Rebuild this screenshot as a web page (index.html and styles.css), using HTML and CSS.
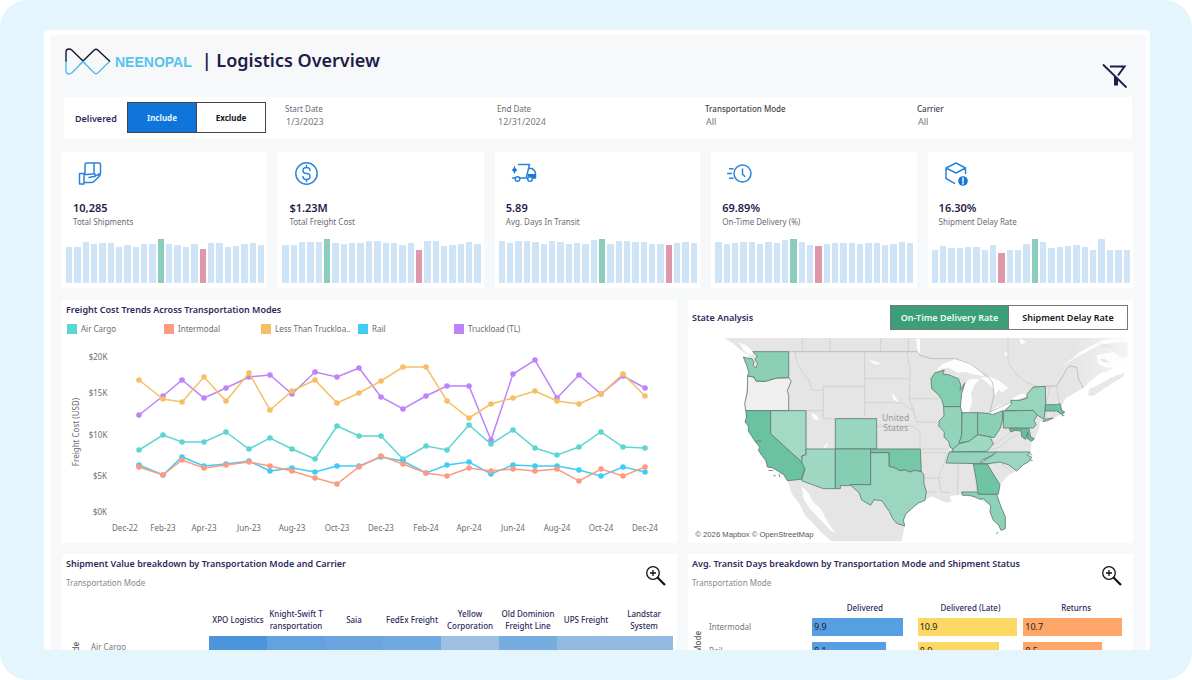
FILE: index.html
```html
<!DOCTYPE html>
<html lang="en">
<head>
<meta charset="utf-8">
<title>Logistics Overview</title>
<link rel="stylesheet" href="styles.css">
</head>
<body>
<div class="stage">
<main class="frame">
<div class="board">
  <header class="head">
    <svg class="logo" viewBox="0 0 46 28" aria-hidden="true">
      <g fill="none" stroke-width="1.400" stroke-linecap="round" stroke-linejoin="round">
        <path stroke="#54bdeb" d="M1 13.500V22.500Q1 26 4 26Q5.500 26 7 24.800L18 13.500L29 24.800Q31 26.500 33 24.800L44.500 13.500"/>
        <path stroke="#15152b" d="M1 13V4.500Q1 1 4 1Q5.500 1 7 2.200L18 13L29 2.200Q31 .5 33 2.200L44.500 13"/>
        <path stroke="#54bdeb" d="M15.500 16L18 13.500L20.500 16"/>
      </g>
    </svg>
    <span class="brand">NEENOPAL</span>
    <h1>| Logistics Overview</h1>
    <button class="clear" aria-label="Clear filters">
      <svg viewBox="0 0 26 26"><path d="M8 3.500H22.500L16 12.500" fill="none" stroke="#1f1c48" stroke-width="2"/><path d="M12 12L16 15.500V22.500H12Z" fill="#1f1c48"/><path d="M1 1.500L24.500 24.500" stroke="#1f1c48" stroke-width="1.800"/></svg>
    </button>
  </header>

  <section class="filters">
    <div class="delivered">
      <span>Delivered</span>
      <div class="seg"><button class="on">Include</button><button>Exclude</button></div>
    </div>
    <div class="field"><label for="start">Start Date</label><input id="start" type="text" value="1/3/2023"></div>
    <div class="field"><label for="end">End Date</label><input id="end" type="text" value="12/31/2024"></div>
    <div class="field strong"><label for="mode">Transportation Mode</label><select id="mode"><option>All</option></select></div>
    <div class="field strong"><label for="carrier">Carrier</label><select id="carrier"><option>All</option></select></div>
  </section>

  <section class="kpis">
    <article class="card kpi">
      <svg class="icon" viewBox="0 0 26 26"><path d="M7 12V3.500Q7 2 8.500 2H21Q22.500 2 22.500 3.500V12.500Q22.500 14 21 14H20M16 2V12.500M7 12.500H1.500V23H6V13.500H10L13 13H17Q18 15 16 15.500L11 16.500M17 15.500L20.500 13Q23 13 21.500 15L16 20.500Q15 21.500 13 21.500H6"/></svg>
      <strong>10,285</strong><p>Total Shipments</p>
      <div class="bars" data-high="11" data-low="16" data-values="108,106,121,117,119,119,107,114,107,116,117,131,116,114,108,117,102,119,119,108,110,117,119,114"></div>
    </article>
    <article class="card kpi">
      <svg class="icon" viewBox="0 0 26 26"><circle cx="12.500" cy="12.500" r="10.700"/><path d="M16 9.500Q16 6.500 12.500 6.500T9 9.500T12.500 12.500T16 15.500T12.500 18.500T9 15.500M12.500 4.500V6.500M12.500 18.500V20.500"/></svg>
      <strong>$1.23M</strong><p>Total Freight Cost</p>
      <div class="bars" data-high="5" data-low="16" data-values="114,114,123,121,121,131,119,116,119,119,126,125,119,119,114,119,99,125,125,111,114,117,123,116"></div>
    </article>
    <article class="card kpi">
      <svg class="icon" viewBox="0 0 26 26"><path d="M7.500 3.500H18.500L15.500 16M18 7.500H21Q24.500 9.500 24.500 13V17H22M1.500 17H4.500M9 17H16"/><circle cx="6.500" cy="18" r="2.300"/><circle cx="19" cy="18" r="2.300"/><path class="solid" d="M3.500 4.500L4.700 7.800L6.500 9L4.700 10.200L3.500 13L2.300 10.200L.8 9L2.300 7.800ZM17 13H24.500V17H22L20 15.500H16.500Z"/></svg>
      <strong>5.89</strong><p>Avg. Days In Transit</p>
      <div class="bars" data-high="12" data-low="20" data-values="126,120,125,125,121,117,125,123,116,120,117,127,131,117,125,125,121,121,117,117,114,120,121,120"></div>
    </article>
    <article class="card kpi">
      <svg class="icon" viewBox="0 0 26 26"><circle cx="15.500" cy="12.500" r="8.500"/><path d="M15.500 8V13L17.800 15.500M2.500 7.800H6M.5 12.500H4.500M2.500 17.200H6"/></svg>
      <strong>69.89%</strong><p>On-Time Delivery (%)</p>
      <div class="bars" data-high="9" data-low="12" data-values="123,117,120,121,121,117,121,120,127,131,121,114,111,116,119,119,119,117,119,119,114,117,121,120"></div>
    </article>
    <article class="card kpi">
      <svg class="icon" viewBox="0 0 26 26"><path d="M10.500 22.300L2 17.500V7L12 2L21.500 7V12.500M2 7L12 12L21.500 7"/><circle class="solid" cx="19" cy="20" r="4.800"/><path class="mark" d="M19 17V20.800M19 22.200V23"/></svg>
      <strong>16.30%</strong><p>Shipment Delay Rate</p>
      <div class="bars" data-high="12" data-low="8" data-values="99,111,103,103,106,108,99,114,88,97,97,117,131,123,103,106,111,114,106,99,131,99,97,97"></div>
    </article>
  </section>

  <section class="row">
    <article class="card trends">
      <h2>Freight Cost Trends Across Transportation Modes</h2>
      <ul class="legend">
        <li class="air">Air Cargo</li><li class="inter">Intermodal</li><li class="ltl">Less Than Truckloa..</li><li class="rail">Rail</li><li class="tl">Truckload (TL)</li>
      </ul>
      <svg id="trend" class="trend" viewBox="62 342 615 200" role="img" aria-label="Freight cost by month"></svg>
    </article>

    <article class="card states">
      <div class="states-head">
        <h2>State Analysis</h2>
        <div class="seg green"><button class="on">On-Time Delivery Rate</button><button>Shipment Delay Rate</button></div>
      </div>
      <svg class="map" viewBox="24 128 1335 614" role="img" aria-label="On-time delivery rate by state">
        <defs><linearGradient id="fade" x1="0" x2="1"><stop offset=".86" stop-color="#e5e5e5"/><stop offset="1" stop-color="#f4f4f4"/></linearGradient></defs>
        <path fill="url(#fade)" d="M133 128L160 145 185 168 212 182 190 185 203 215 203 250 194 325 197 380 228 440 262 515 295 528 322 556 335 595 358 625 375 660 400 685 425 712 455 738H665L674 692 672 665 700 635 735 615 755 603 775 612 800 622 815 618 808 603 845 597 870 605 900 612 930 632 932 660 963 705 976 700 976 665 960 625 950 597 960 568 985 540 1010 527 1035 505 1055 490 1052 460 1055 438 1063 430 1078 400 1080 378 1120 368 1150 355 1145 330 1158 308 1210 278 1240 250 1260 235 1290 225 1300 215 1318 200 1345 180 1340 128Z"/>
        <path fill="#e8e8e8" d="M1225 300L1227 282 1255 268 1288 250 1310 240 1335 232 1328 245 1300 262 1265 285 1240 302Z"/>
        <path fill="#fdfdfd" d="M1142 216L1170 195 1200 170 1240 148 1270 133 1345 128V140L1300 142 1255 150 1220 170 1190 185 1160 205ZM1250 180L1300 170 1345 200 1320 215 1280 218 1255 205ZM365 573L385 592 400 620 422 640 445 682 465 712 452 706 420 672 390 640 370 610ZM178 140L205 155 222 172 214 180 190 165ZM393 352L410 360 416 375 400 372ZM430 455L445 440 438 458ZM565 192L583 198 603 205 585 208ZM636 290L650 310 655 323 640 312Z"/>
        <path fill="#e8e8e8" d="M1258 192L1275 190 1290 202 1268 200ZM1255 144L1290 148 1300 160 1270 156Z"/>
        <g fill="#fdfdfd">
          <path d="M763 235L785 208 825 190 870 202 905 230 912 243 875 236 858 230 835 232 805 217 785 220ZM841 300L850 268 870 250 900 250 883 270 873 294 877 318 867 350 848 352 841 333ZM898 246L930 245 955 255 985 278 965 292 958 282 945 300 940 280 920 260ZM928 356L950 335 990 322 995 330 965 346 938 360ZM995 312L1020 296 1043 296 1040 306 1010 316ZM1020 128L1038 140 1022 150ZM972 170L986 174 978 184ZM708 130L720 130 720 175 713 172Z"/>
        </g>
        <g fill="none" stroke="#c9c9c9" stroke-width="2">
          <path d="M367 128V165M450 128V169M602 128V169M685 128V169M345 169L350 200 370 235 385 250 397 285 430 284M430 273H554M554 169V365M554 250H688M554 322H665L705 350M686 310H780M430 273V370M326 346H430M430 370H590M378 346V461M680 169L690 220 688 310 700 345 710 380H775M590 393H700L720 410V461M682 461H802M721 472H800M724 548H785M738 590H770M802 472L790 510 775 545 783 590 810 592M835 506L832 600M885 506L890 590M925 507L960 500 995 530M934 450L955 440 985 415 1010 398M984 128V200L1010 240 1040 262 1070 273M1110 273L1098 328M1130 272L1138 328M1098 347V372M1123 347V362M915 468L960 455 990 430 1015 418"/>
          <path stroke="#aaa" d="M326 169H712L720 180 755 190 795 190 825 190 870 205 925 245 938 262 942 300 930 350 990 322 1040 306 1060 275 1096 273 1130 272 1150 240 1162 218 1172 212 1190 216 1196 252 1210 278"/>
        </g>
        <g stroke="#5f7b72" stroke-width="2.500" stroke-linejoin="round">
          <path fill="#efefef" d="M203 242L222 245 228 257 255 258 290 248 326 247 334 258 322 285 326 300V346H197L194 325 202 290Z"/>
          <path fill="#8bd0b5" d="M190 185L205 190 216 190 222 200 219 211 227 218 233 205 225 192 232 182 218 169H326V247L290 248 255 258 228 257 222 245 203 242 207 232 200 210Z"/>
          <path fill="#6bc2a0" d="M198 346H272V415L368 503 375 520 367 540 365 552 322 556 312 538 295 528 277 517 262 515 258 495 245 480 235 465 240 455 228 442 205 407V392L195 380 200 365Z"/>
          <path fill="#a3dac6" d="M272 346H378V478L365 482 368 503 272 415Z"/>
          <path fill="#99d6bf" d="M466 370H590V461H466Z"/>
          <path fill="#a0d9c3" d="M378 461H466V580H430L365 556 375 520 366 503V482L378 478Z"/>
          <path fill="#86ceb3" d="M466 461H572V568H510V571H481V580H466Z"/>
          <path fill="#75c7a7" d="M572 461H721L724 529 705 525 690 530 675 524 660 526 645 518 627 513V472H572Z"/>
          <path fill="#9bd6c0" d="M572 472H627V513L645 518 660 526 675 524 690 530 705 525 724 529 731 537 732 565 739 590 735 615 715 623 695 640 678 655 670 675 674 692 650 684 638 670 628 648 605 616 582 613 572 630 545 614 537 592 510 568H572Z"/>
          <path fill="#83cdb1" d="M753 250L765 232 793 224 788 236 805 238 835 250 842 268 840 285 855 262 845 295 841 334H791L785 312 775 298 755 280Z"/>
          <path fill="#95d4bc" d="M791 334H841L846 352 845 420 837 447 820 462 810 455 807 440 792 425 793 410 776 392 778 376 792 362Z"/>
          <path fill="#8cd0b6" d="M846 352H893V418L878 430 868 438 837 443 845 420Z"/>
          <path fill="#8ad0b5" d="M893 352L925 354 938 358 968 346 967 378 960 400 942 427 915 422 893 418Z"/>
          <path fill="#9fd8c3" d="M815 470L820 460 838 445 868 438 880 428 895 418 915 422 930 424 940 446 920 468Z"/>
          <path fill="#93d3bb" d="M808 470H950L930 484 905 495 900 505 798 503Z"/>
          <path fill="#9bd6c0" d="M950 470H1050L1042 480 1055 486 1045 500 1030 508 1010 527 985 508 960 500 922 505H902L920 490 935 482Z"/>
          <path fill="#6fc4a4" d="M880 506H922L938 533 960 568 955 597H895L890 560Z"/>
          <path fill="#8dd1b7" d="M845 590H890L895 597H950L962 632 976 665V700L963 705 957 690 940 675 930 650 932 630 910 610 900 612 888 606 870 600 847 600Z"/>
          <path fill="#97d5bd" d="M975 346L995 325 992 315 1020 315 1042 308 1040 298 1060 275 1096 273 1097 325 1092 372 1070 358 1060 346Z"/>
          <path fill="#8fd2b9" d="M970 347L1060 345 1072 360 1062 375 1068 388 1060 398H970Z"/>
          <path fill="#66bf9d" d="M988 400H1047L1052 425 1063 430 1055 438 1043 430 1043 410 1037 432 1025 424 1023 407 1005 405 992 410Z"/>
          <path fill="#6cc2a2" d="M1096 328H1130L1140 325 1145 345 1154 350 1147 358 1130 347H1096Z"/>
          <path fill="#97d5bd" d="M1088 378L1098 371 1120 368 1100 377Z"/>
          <path d="M265 525L280 526M280 540L287 542M297 535L300 546M948 715L955 711M229 437L245 437M1145 362L1153 360M1050 474L1056 480M1049 494L1058 496" fill="none"/>
        </g>
        <g class="country"><text x="647" y="377">United</text><text x="647" y="408">States</text></g>
        <text class="credit" x="46" y="724">© 2026 Mapbox © OpenStreetMap</text>
      </svg>
    </article>
  </section>

  <section class="row">
    <article class="card detail">
      <div class="detail-head">
        <div><h2>Shipment Value breakdown by Transportation Mode and Carrier</h2><p>Transportation Mode</p></div>
        <button class="zoom" aria-label="Expand carrier breakdown"><svg viewBox="0 0 22 22"><circle cx="8" cy="8" r="6.300"/><path d="M5 8H11M8 5V11"/><path class="handle" d="M12.500 12.500L20 20"/></svg></button>
      </div>
      <table class="heat">
        <thead><tr><td></td><td></td><th>XPO Logistics</th><th>Knight-Swift T<br>ransportation</th><th>Saia</th><th>FedEx Freight</th><th>Yellow Corporation</th><th>Old Dominion Freight Line</th><th>UPS Freight</th><th>Landstar System</th></tr></thead>
        <tbody><tr><th class="axis"><span>Mode</span></th><th class="name">Air Cargo</th><td class="v1"></td><td class="v2"></td><td class="v3"></td><td class="v4"></td><td class="v7"></td><td class="v5"></td><td class="v6"></td><td class="v6"></td></tr></tbody>
      </table>
    </article>

    <article class="card detail">
      <div class="detail-head short">
        <div><h2>Avg. Transit Days breakdown by Transportation Mode and Shipment Status</h2><p>Transportation Mode</p></div>
        <button class="zoom" aria-label="Expand transit days"><svg viewBox="0 0 22 22"><circle cx="8" cy="8" r="6.300"/><path d="M5 8H11M8 5V11"/><path class="handle" d="M12.500 12.500L20 20"/></svg></button>
      </div>
      <table class="days">
        <thead><tr><td></td><td></td><th>Delivered</th><th>Delivered (Late)</th><th>Returns</th></tr></thead>
        <tbody>
          <tr><th class="axis" rowspan="2"><span>Mode</span></th><th class="name">Intermodal</th><td><div class="bar done" style="width:86%">9.9</div></td><td><div class="bar late" style="width:94%">10.9</div></td><td><div class="bar back" style="width:93%">10.7</div></td></tr>
          <tr><th class="name">Rail</th><td><div class="bar done" style="width:70%">8.1</div></td><td><div class="bar late" style="width:77%">8.9</div></td><td><div class="bar back" style="width:74%">8.5</div></td></tr>
        </tbody>
      </table>
    </article>
  </section>
</div>
</main>
</div>
<script src="charts.js"></script>
</body>
</html>
```
FILE: styles.css
```css
* { box-sizing: border-box; margin: 0; padding: 0; }
body { background: #fff; font-family: "Noto Sans", sans-serif; font-size: 8px; line-height: 12px; color: #6b6b75; }
button, input, select { font: inherit; color: inherit; border: 0; background: none; appearance: none; }
button { cursor: pointer; }
.stage { height: 100vh; padding: 30px 42px 30px 44px; background: #e5f5fd; border-radius: 28px; }
.frame { height: 100%; overflow: hidden; padding: 5px 4px 0 6px; background: #fff; border-radius: 4px; }
.board { min-height: 100%; padding: 12px 13px 0 12px; background: #f6f8fa; border-radius: 4px 4px 0 0; }
.card { background: #fff; min-width: 0; }
h1 { font-size: 18px; line-height: 26px; font-weight: 600; color: #1f1c48; }
h2 { font-size: 9px; line-height: 12px; font-weight: 600; color: #2c2a5c; white-space: nowrap; }

.head { display: flex; align-items: flex-start; height: 50px; padding-left: 3px; }
.logo { width: 46px; height: 28px; margin-top: 1px; }
.brand { margin: 6px 10px 0 4px; font: bold 14px/18px "Liberation Sans", sans-serif; color: #58c4ee; }
.clear { width: 26px; height: 26px; margin: 16px 5px 0 auto; }

.filters { display: grid; grid-template-columns: 221px 212px 208px 212px 1fr; height: 42px; margin: 0 1px 13px 2px; background: #fff; }
.delivered { display: flex; align-items: flex-start; gap: 12px; padding: 5px 0 0 11px; font-size: 9px; font-weight: 600; color: #2c2a5c; }
.delivered > span { width: 40px; padding-top: 11px; }
.seg { display: flex; color: #16161e; font-size: 8px; font-weight: 700; }
.seg button { width: 70px; height: 31px; border: 1px solid #444; }
.seg button + button { border-left-width: 0; width: 69px; }
.seg .on { background: #0f75db; color: #e6f2ff; }
.seg.green { font-size: 9px; font-weight: 600; }
.seg.green button { width: 119px; height: 25px; border-color: #777; }
.seg.green .on { background: #3d9f79; color: #eafff5; }
.field { display: flex; flex-direction: column; padding-top: 6px; }
.field input, .field select { width: 100px; height: 13px; padding-left: 1px; font-size: 9px; color: #77777c; }
.field.strong label { font-weight: 500; color: #44444c; }

.kpis { display: grid; grid-template-columns: repeat(5, 1fr); gap: 11px; margin-bottom: 12px; }
.kpi { display: flex; flex-direction: column; padding: 9px 3px 5px 4px; height: 136px; }
.icon { width: 26px; height: 26px; margin-left: 12px; fill: none; stroke: #2b84dc; stroke-width: 1.500; stroke-linecap: round; stroke-linejoin: round; }
.icon .solid { fill: #1676d8; stroke: none; }
.icon .mark { stroke: #fff; }
.kpi strong { margin: 13px 0 0 7px; font-size: 11px; line-height: 16px; font-weight: 600; color: #1f1c48; }
.kpi p { margin-left: 7px; }
.bars { display: flex; align-items: flex-end; gap: 2px; height: 44px; margin-top: auto; }
.bars i { flex: 1; background: #cfe4f7; }
.bars .high { background: #8accbe; }
.bars .low { background: #df98aa; }

.row { display: grid; grid-template-columns: 615fr 445fr; gap: 11px; margin-bottom: 11px; }
.trends { padding-top: 4px; }
.trends h2 { padding-left: 4px; }
.legend { display: grid; grid-template-columns: 97px 97px 97px 96px 1fr; padding: 6px 0 6px 5px; list-style: none; line-height: 14px; }
.legend li { display: flex; align-items: center; gap: 4px; white-space: nowrap; }
.legend li::before { content: ""; width: 10px; height: 10px; background: var(--c); }
.air { --c: #5cd6d0; } .inter { --c: #fd9a80; } .ltl { --c: #f7bf65; } .rail { --c: #3fcdf8; } .tl { --c: #bd83fa; }
.trend, .map { display: block; width: 100%; }
.trend text { fill: #6b6b75; font-size: 8px; text-anchor: middle; }
.trend polyline { fill: none; stroke: var(--c); stroke-width: 1.500; }
.trend circle { fill: var(--c); }
.states-head { display: flex; justify-content: space-between; padding: 5px 5px 8px 4px; }
.states-head h2 { padding-top: 7px; }
.country { fill: #999; font-size: 26px; text-anchor: middle; }
.credit { font: 23px "Liberation Sans", sans-serif; fill: #555; }

.detail { padding: 4px 4px 0; min-height: 110px; }
.detail-head { display: flex; justify-content: space-between; height: 46px; }
.detail-head.short { height: 43px; }
.detail-head p { margin-top: 7px; color: #888; }
.zoom { width: 22px; height: 22px; margin: 7px 6px 0 0; }
.zoom svg { fill: none; stroke: #111; stroke-width: 1.300; }
.zoom .handle { stroke-width: 2.200; }
table { width: 100%; border-collapse: collapse; table-layout: fixed; }
th { font-weight: 500; color: #2c2a5c; }
.axis { vertical-align: top; color: #555; }
.axis span { writing-mode: vertical-rl; transform: rotate(180deg); }
.name { padding-left: 5px; text-align: left; font-weight: 400; color: #777; }
.heat thead th { height: 32px; }
.heat tr > :first-child { width: 20px; }
.heat tr > :nth-child(2) { width: 123px; }
.heat tbody .name { padding-top: 5px; vertical-align: top; }
.heat .axis { padding-top: 6px; }
.v1 { background: #4c94dc; } .v2 { background: #62a2e0; } .v3 { background: #6aa5df; } .v4 { background: #70a9df; }
.v5 { background: #77acdf; } .v6 { background: #92b9e1; } .v7 { background: #9dbfe2; }
.days thead tr > :first-child { width: 12px; }
.days thead tr > :nth-child(2) { width: 108px; }
.days thead th { height: 14px; }
.days tbody tr { height: 24px; }
.days .axis { padding-top: 16px; }
.bar { height: 18px; padding-left: 2px; font-size: 9px; line-height: 18px; color: #222; }
.done { background: #569fe2; } .late { background: #fcd764; } .back { background: #fea668; }
```
FILE: charts.js
```javascript
document.querySelectorAll(".bars").forEach(function (box) {
  box.dataset.values.split(",").forEach(function (v, i) {
    var bar = document.createElement("i");
    bar.style.height = (v / 1.31) + "%";
    if (i === +box.dataset.high) bar.className = "high";
    if (i === +box.dataset.low) bar.className = "low";
    box.appendChild(bar);
  });
});

var svg = document.getElementById("trend");
function add(name, attrs, text) {
  var el = document.createElementNS("http://www.w3.org/2000/svg", name);
  for (var k in attrs) el.setAttribute(k, attrs[k]);
  if (text) el.textContent = text;
  svg.appendChild(el);
}
var xs = [139, 163, 182, 204, 226, 249, 270, 292, 315, 337, 359, 381, 403, 426, 447, 469, 491, 513, 535, 557, 579, 601, 623, 645];
var series = {
  tl: [415, 396, 380, 398, 388, 377, 375, 394, 372, 377, 368, 397, 409, 396, 386, 386, 440, 374, 360, 398, 375, 394, 376, 388],
  ltl: [380, 399, 402, 377, 401, 373, 410, 391, 380, 403, 393, 381, 367, 367, 401, 418, 404, 398, 391, 401, 404, 394, 374, 396],
  air: [450, 435, 442, 442, 432, 449, 438, 449, 459, 426, 436, 436, 459, 446, 450, 425, 444, 430, 448, 455, 447, 432, 447, 448],
  rail: [465, 475, 457, 466, 464, 461, 471, 468, 472, 466, 466, 457, 461, 473, 465, 462, 474, 465, 466, 466, 470, 476, 467, 472],
  inter: [467, 475, 460, 468, 465, 462, 466, 471, 478, 484, 467, 456, 464, 473, 476, 468, 471, 469, 471, 469, 481, 469, 476, 467]
};
for (var key in series) {
  add("polyline", { "class": key, points: xs.map(function (x, i) { return x + "," + series[key][i]; }).join(" ") });
  series[key].forEach(function (y, i) { add("circle", { "class": key, cx: xs[i], cy: y, r: 2.8 }); });
}
[["$20K", 98, 360], ["$15K", 98, 396], ["$10K", 98, 438], ["$5K", 100, 479], ["$0K", 100, 515]].forEach(function (t) {
  add("text", { x: t[1], y: t[2] }, t[0]);
});
["Dec-22", "Feb-23", "Apr-23", "Jun-23", "Aug-23", "Oct-23", "Dec-23", "Feb-24", "Apr-24", "Jun-24", "Aug-24", "Oct-24", "Dec-24"].forEach(function (m, i) {
  add("text", { x: i ? xs[2 * i - 1] : 125, y: 531 }, m);
});
add("text", { x: 0, y: 0, transform: "translate(79 432) rotate(-90)" }, "Freight Cost (USD)");
```
